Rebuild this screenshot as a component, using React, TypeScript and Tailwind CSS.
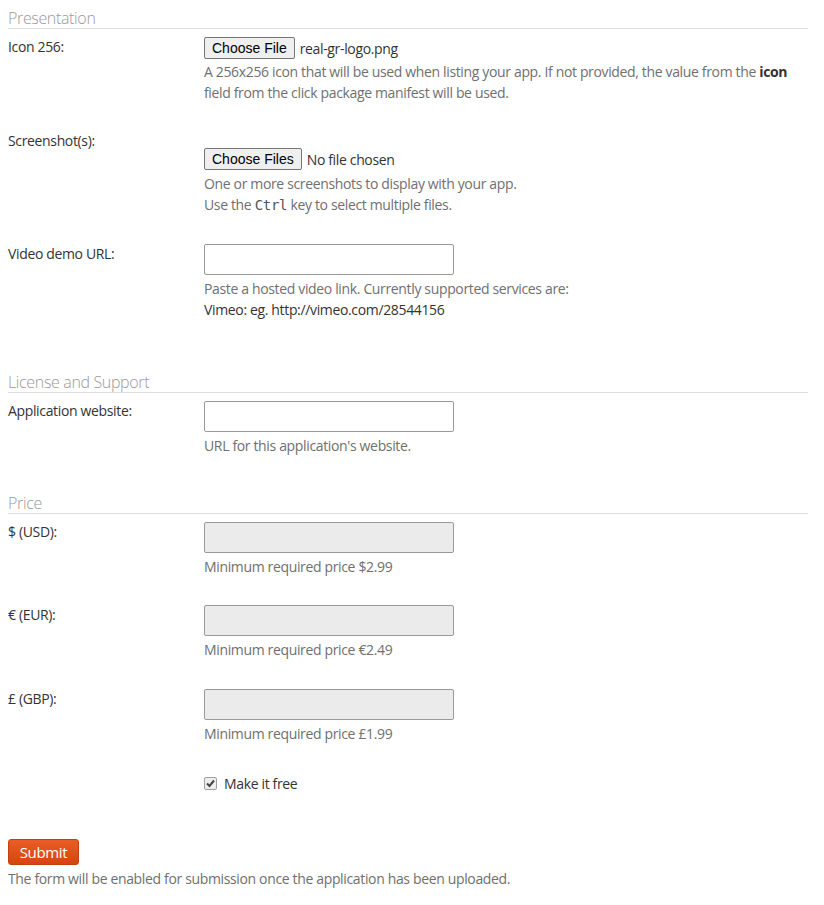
import React from "react";

const font = { fontFamily: '"Open Sans", "Noto Sans", sans-serif', letterSpacing: "-0.35px" };

function Heading({ children, className = "" }: { children: React.ReactNode; className?: string }) {
  return (
    <div className={`h-[21px] border-b border-[#dddddd] text-[16px] leading-[20px] text-[#999999] font-light ${className}`}>
      {children}
    </div>
  );
}

function Row({ label, children, className = "" }: { label: string; children: React.ReactNode; className?: string }) {
  return (
    <div className={`flex ${className}`}>
      <div className="w-[196px] shrink-0 text-[14px] leading-[20px] text-[#333333]">{label}</div>
      <div className="flex-1">{children}</div>
    </div>
  );
}

function FileBtn({ label, file }: { label: string; file: string }) {
  return (
    <div className="flex items-center h-[22px]">
      <span
        className="h-[22px] px-[7px] flex items-center border border-[#767676] rounded-[2px] bg-[#efefef] text-[14px] text-black"
        style={{ fontFamily: '"Liberation Sans", Arial, sans-serif', letterSpacing: "0px" }}
      >
        {label}
      </span>
      <span className="ml-[5px] text-[14px] text-[#333333]">{file}</span>
    </div>
  );
}

function TextInput({ disabled = false }: { disabled?: boolean }) {
  return (
    <div
      className={`w-[250px] h-[31px] border border-[#999999] rounded-[2px] ${disabled ? "bg-[#ebebeb]" : "bg-white"}`}
    />
  );
}

function Help({ children, className = "" }: { children: React.ReactNode; className?: string }) {
  return <div className={`text-[14px] leading-[21px] text-[#6f6f6f] ${className}`}>{children}</div>;
}

export default function App() {
  return (
    <div className="bg-white w-[824px] min-h-[905px] px-[8px] pt-[8px]" style={font}>
      <div className="w-[800px]">
        <Heading>Presentation</Heading>

        <Row label="Icon 256:" className="mt-[8px]">
          <FileBtn label="Choose File" file="real-gr-logo.png" />
          <Help className="mt-[2px]">
            A 256x256 icon that will be used when listing your app. If not provided, the value from the{" "}
            <b className="font-bold text-[#333333]">icon</b> field from the click package manifest will be used.
          </Help>
        </Row>

        <Row label="Screenshot(s):" className="mt-[28px]">
          <div className="h-[17px]" />
          <FileBtn label="Choose Files" file="No file chosen" />
          <Help className="mt-[3px]">
            One or more screenshots to display with your app.
            <br />
            Use the{" "}
            <code
              className="text-[14px] text-[#555555]"
              style={{ fontFamily: '"DejaVu Sans Mono", monospace', letterSpacing: "-0.3px" }}
            >
              Ctrl
            </code>{" "}
            key to select multiple files.
          </Help>
        </Row>

        <Row label="Video demo URL:" className="mt-[28px]">
          <TextInput />
          <Help className="mt-[3px]">
            Paste a hosted video link. Currently supported services are:
            <br />
            <span className="text-[#333333]">Vimeo: eg. http://vimeo.com/28544156</span>
          </Help>
        </Row>

        <Heading className="mt-[52px]">License and Support</Heading>

        <Row label="Application website:" className="mt-[8px]">
          <TextInput />
          <Help className="mt-[3px]">URL for this application's website.</Help>
        </Row>

        <Heading className="mt-[37px]">Price</Heading>

        <Row label="$ (USD):" className="mt-[8px]">
          <TextInput disabled />
          <Help className="mt-[3px]">Minimum required price $2.99</Help>
        </Row>

        <Row label="€ (EUR):" className="mt-[28px]">
          <TextInput disabled />
          <Help className="mt-[3px]">Minimum required price €2.49</Help>
        </Row>

        <Row label="£ (GBP):" className="mt-[29px]">
          <TextInput disabled />
          <Help className="mt-[3px]">Minimum required price £1.99</Help>
        </Row>

        <div className="flex mt-[29px]">
          <div className="w-[196px] shrink-0" />
          <div className="flex items-center h-[20px]">
            <span className="w-[13px] h-[13px] border border-[#a0a0a0] rounded-[2px] bg-[#eeeeee] flex items-center justify-center">
              <svg width="9" height="9" viewBox="0 0 9 9">
                <path d="M1 4.5 L3.5 7 L8 1.5" stroke="#444444" strokeWidth="2" fill="none" />
              </svg>
            </span>
            <span className="ml-[7px] text-[14px] text-[#333333]">Make it free</span>
          </div>
        </div>

        <button
          className="mt-[46px] w-[71px] h-[26px] rounded-[3px] border border-[#c1410f] text-white text-[15px] leading-[24px] bg-gradient-to-b from-[#ea5d24] to-[#d6450f]"
          style={font}
        >
          Submit
        </button>
        <div className="mt-[4px] text-[14px] leading-[20px] text-[#6f6f6f]">
          The form will be enabled for submission once the application has been uploaded.
        </div>
      </div>
    </div>
  );
}
